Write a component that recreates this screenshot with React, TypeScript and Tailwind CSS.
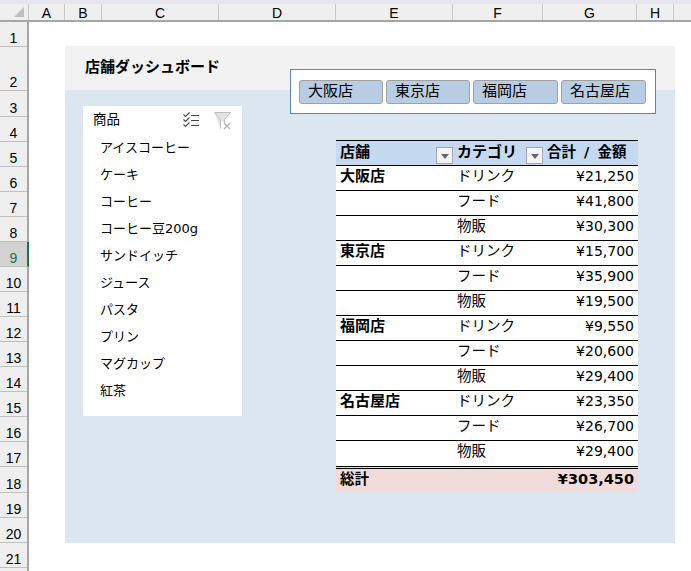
const columns = [
  { label: "A", width: "w-[36px]" },
  { label: "B", width: "w-[37px]" },
  { label: "C", width: "w-[117px]" },
  { label: "D", width: "w-[117px]" },
  { label: "E", width: "w-[117px]" },
  { label: "F", width: "w-[90px]" },
  { label: "G", width: "w-[94px]" },
  { label: "H", width: "w-[37px]" },
];

const rows = [
  { n: 1, h: "h-[25px]" },
  { n: 2, h: "h-[44px]" },
  { n: 3, h: "h-[25.5px]" },
  { n: 4, h: "h-[25px]" },
  { n: 5, h: "h-[25px]" },
  { n: 6, h: "h-[25px]" },
  { n: 7, h: "h-[25px]" },
  { n: 8, h: "h-[25px]" },
  { n: 9, h: "h-[25px]" },
  { n: 10, h: "h-[25px]" },
  { n: 11, h: "h-[25px]" },
  { n: 12, h: "h-[25px]" },
  { n: 13, h: "h-[25px]" },
  { n: 14, h: "h-[25px]" },
  { n: 15, h: "h-[25px]" },
  { n: 16, h: "h-[25px]" },
  { n: 17, h: "h-[25px]" },
  { n: 18, h: "h-[26.5px]" },
  { n: 19, h: "h-[25px]" },
  { n: 20, h: "h-[25px]" },
  { n: 21, h: "h-[25px]" },
];

const products = [
  "アイスコーヒー",
  "ケーキ",
  "コーヒー",
  "コーヒー豆200g",
  "サンドイッチ",
  "ジュース",
  "パスタ",
  "プリン",
  "マグカップ",
  "紅茶",
];

const stores = [
  { name: "大阪店", width: "w-[84px]" },
  { name: "東京店", width: "w-[84px]" },
  { name: "福岡店", width: "w-[85px]" },
  { name: "名古屋店", width: "w-[85px]" },
];

const sales = [
  { store: "大阪店", cat: "ドリンク", amount: "¥21,250" },
  { store: "", cat: "フード", amount: "¥41,800" },
  { store: "", cat: "物販", amount: "¥30,300" },
  { store: "東京店", cat: "ドリンク", amount: "¥15,700" },
  { store: "", cat: "フード", amount: "¥35,900" },
  { store: "", cat: "物販", amount: "¥19,500" },
  { store: "福岡店", cat: "ドリンク", amount: "¥9,550" },
  { store: "", cat: "フード", amount: "¥20,600" },
  { store: "", cat: "物販", amount: "¥29,400" },
  { store: "名古屋店", cat: "ドリンク", amount: "¥23,350" },
  { store: "", cat: "フード", amount: "¥26,700" },
  { store: "", cat: "物販", amount: "¥29,400" },
];

const FilterButton = () => (
  <span className="absolute right-0 bottom-[1px] flex h-[17px] w-[17px] items-center justify-center border border-[#a6a6a6] bg-[#f4f5f8]">
    <span className="mt-[1px] h-0 w-0 border-x-[4px] border-t-[5px] border-x-transparent border-t-[#666666]" />
  </span>
);

const MultiSelectIcon = () => (
  <svg width="17" height="16" viewBox="0 0 17 16" fill="none" stroke="#444444" strokeWidth="1.1">
    <path d="M0.5 2.5 L2.5 4.5 L6.5 0.5" />
    <path d="M0.5 7.5 L2.5 9.5 L6.5 5.5" />
    <path d="M0.5 12.5 L2.5 14.5 L6.5 10.5" />
    <path d="M8 3.5 H16 M8 8.5 H16 M8 13.5 H16" />
  </svg>
);

const ClearFilterIcon = () => (
  <svg width="17" height="18" viewBox="0 0 17 18" fill="none">
    <path d="M0.5 0.5 H16.5 L10.5 7.5 V11 M6.5 16.5 V7.5 L0.5 0.5" fill="#e2e2e2" stroke="#bdbdbd" strokeWidth="1" />
    <path d="M10 11 L16 17 M16 11 L10 17" stroke="#b4b4b4" strokeWidth="1.4" />
  </svg>
);

export default function App() {
  return (
    <div className="h-[571px] w-[691px] overflow-hidden bg-white font-['Liberation_Sans','Noto_Sans_CJK_JP',sans-serif] text-black">
      {/* タブ下の帯 */}
      <div className="h-[4px] bg-[#e6e4ec]" />

      {/* 列ヘッダー */}
      <div className="flex h-[18px] border-b-2 border-[#a6a6a6] bg-[#efefef] text-[14px] leading-[16px]">
        <div className="flex w-[29px] shrink-0 items-end justify-end border-r border-[#c8c8c8] pr-[4px] pb-[3px]">
          <span className="h-0 w-0 border-b-[10px] border-l-[10px] border-b-[#bfbfbf] border-l-transparent" />
        </div>
        {columns.map((col) => (
          <div key={col.label} className={`${col.width} shrink-0 border-r border-[#c8c8c8] pt-[1px] text-center`}>
            {col.label}
          </div>
        ))}
      </div>

      <div className="flex">
        {/* 行ヘッダー */}
        <div className="h-[549px] w-[29px] shrink-0 border-r-2 border-[#a6a6a6] bg-[#efefef] text-[14px] leading-[16px]">
          {rows.map((row) => (
            <div
              key={row.n}
              className={`${row.h} flex items-end justify-center border-b border-[#c0c0c0] ${
                row.n === 9 ? "-mr-[2px] border-r-2 border-r-[#217346] bg-[#d2d2d2] text-[#217346]" : ""
              }`}
            >
              {row.n}
            </div>
          ))}
        </div>

        {/* シート */}
        <div className="pt-[24px] pl-[36px]">
          <div className="relative h-[497px] w-[610px] bg-[#dce6f1]">
            <div className="flex h-[44px] items-center bg-[#f2f2f2] pb-[2px] pl-[20px] text-[15px] font-bold">
              店舗ダッシュボード
            </div>

            {/* 店舗スライサー */}
            <div className="absolute top-[23px] left-[225px] flex h-[45px] w-[366px] items-center gap-[3px] border border-[#5b85bf] bg-white pl-[8px]">
              {stores.map((store) => (
                <div
                  key={store.name}
                  className={`${store.width} flex h-[24px] items-center rounded-[3px] border border-[#a0a0a0] bg-[#b8cce4] pl-[8px] text-[15px]`}
                >
                  {store.name}
                </div>
              ))}
            </div>

            <div className="flex items-start pt-[16px] pl-[18px]">
              {/* 商品スライサー */}
              <div className="h-[310px] w-[159px] shrink-0 bg-white font-['DejaVu_Sans','Noto_Sans_CJK_JP',sans-serif]">
                <div className="flex h-[28px] items-center pb-[1px] pl-[10px] text-[13.5px]">
                  <span className="flex-1">商品</span>
                  <span className="mr-[14px]">
                    <MultiSelectIcon />
                  </span>
                  <span className="mr-[11px] mt-[2px]">
                    <ClearFilterIcon />
                  </span>
                </div>
                {products.map((item) => (
                  <div key={item} className="flex h-[27px] items-center pl-[17px] text-[13px]">
                    {item}
                  </div>
                ))}
              </div>

              {/* ピボットテーブル */}
              <div className="mt-[34px] ml-[94px] w-[302px] font-['DejaVu_Sans','Noto_Sans_CJK_JP',sans-serif]">
                <div className="flex h-[26px] border-y border-black bg-[#c5d9f1] text-[15px] font-bold">
                  <div className="relative w-[117px] pl-[4px] leading-[23px]">
                    店舗
                    <FilterButton />
                  </div>
                  <div className="relative w-[90px] pl-[4px] leading-[23px]">
                    カテゴリ
                    <FilterButton />
                  </div>
                  <div className="w-[94px] pl-[4px] text-[14.5px] leading-[23px] [word-spacing:3px]">合計 / 金額</div>
                </div>
                {sales.map((row, i) => (
                  <div key={i} className={`flex h-[25px] bg-white ${i < sales.length - 1 ? "border-b border-black" : ""}`}>
                    <div className="w-[117px] pl-[4px] text-[15px] leading-[21px] font-bold">{row.store}</div>
                    <div className="w-[90px] pl-[4px] text-[14.5px] leading-[21px]">{row.cat}</div>
                    <div className="w-[94px] pr-[3px] text-right text-[14px] leading-[21px]">{row.amount}</div>
                  </div>
                ))}
                <div className="flex h-[26px] border-t-[3px] border-double border-black bg-[#f2dcdb] font-bold">
                  <div className="flex-1 pl-[4px] text-[14.5px] leading-[20px]">総計</div>
                  <div className="pr-[4px] text-[14.5px] leading-[20px]">¥303,450</div>
                </div>
              </div>
            </div>
          </div>
        </div>
      </div>
    </div>
  );
}
